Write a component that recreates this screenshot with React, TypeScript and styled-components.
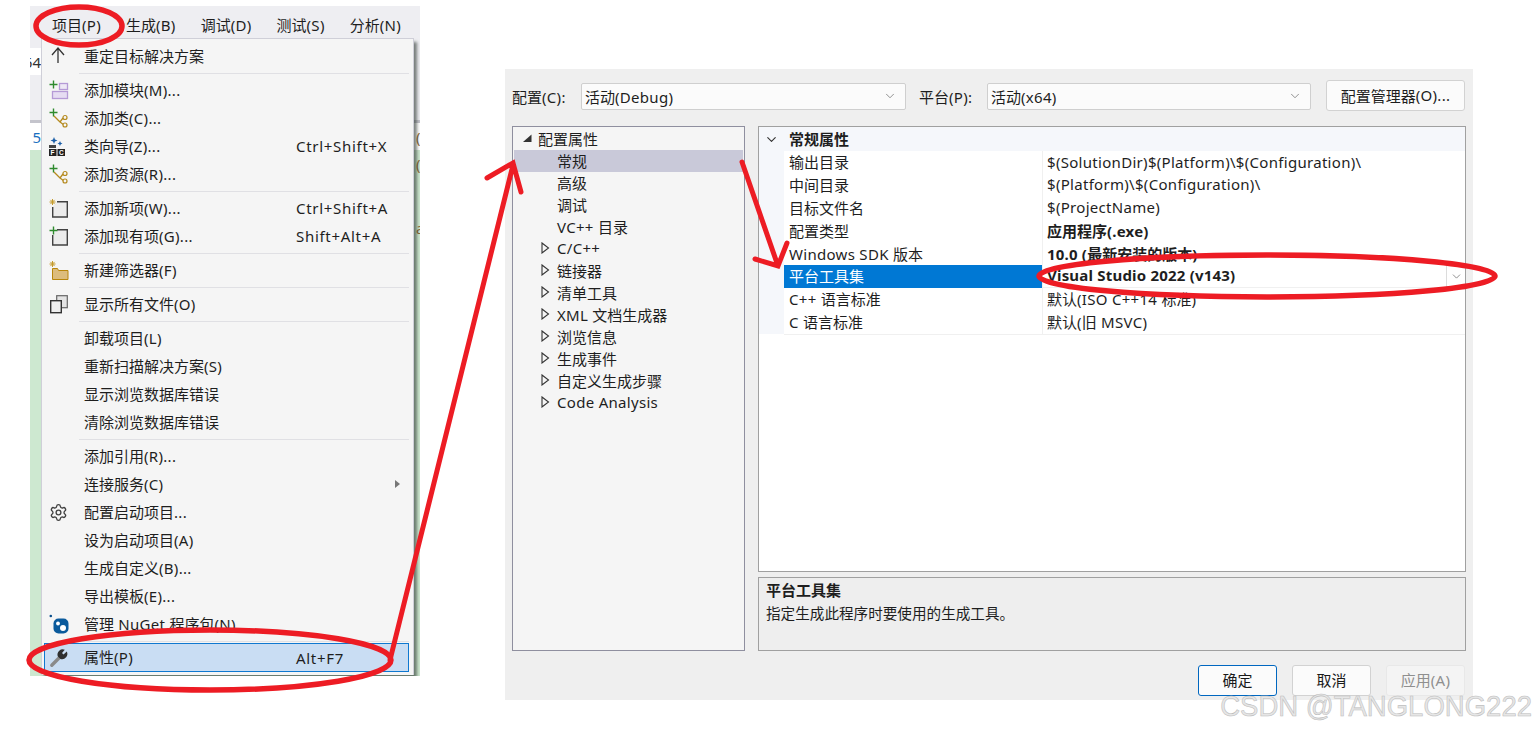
import React from 'react';
import styled, { createGlobalStyle } from 'styled-components';
import { ChevronDown, Settings } from 'lucide-react';

const GlobalStyle = createGlobalStyle`
  html, body { margin: 0; padding: 0; background: #fff; }
  body { font-family: "Noto Sans", "Noto Sans CJK SC", sans-serif; font-size: 15px; color: #1e1e1e; }
  * { box-sizing: border-box; }
`;

// Latin runs are a little wider in the reference's UI font than in Noto Sans
const Latin = styled.span`
  letter-spacing: 0.3px;
`;

const T = ({ s }: { s: string }) => (
  <>{s.split(/([\x20-\x7e]+)/).map((part, i) => (i % 2 ? <Latin key={i}>{part}</Latin> : part))}</>
);

// --- PAGE ---
const Page = styled.div`
  position: relative;
  display: flex;
  align-items: flex-start;
  width: 1536px;
  height: 732px;
  overflow: hidden;
  background: #fff;
`;

// --- IDE BEHIND THE MENU ---
const Ide = styled.div`
  position: relative;
  flex: none;
  width: 390px;
  height: 670px;
  margin: 6px 0 0 30px;
  display: flex;
  flex-direction: column;
  overflow: hidden;
`;

const MenuBar = styled.div`
  display: flex;
  align-items: center;
  gap: 25px;
  height: 32px;
  flex: none;
  padding: 4px 0 0 22px;
  background: #eeeef2;
`;

const Strip = styled.div<{ $h: number; $bg: string }>`
  display: flex;
  justify-content: space-between;
  align-items: center;
  height: ${p => p.$h}px;
  flex: none;
  background: ${p => p.$bg};
`;

const Canvas = styled.div`
  flex: 1;
  display: flex;
  flex-direction: column;
  align-items: flex-end;
  padding-top: 4px;
  gap: 44px;
  background: #cde8d0;
`;

const Edge = styled.span<{ $color?: string }>`
  width: 11px;
  height: 100%;
  display: flex;
  align-items: center;
  justify-content: flex-end;
  overflow: hidden;
  white-space: nowrap;
  color: ${p => p.$color ?? '#333'};
  background: #fff;
`;

const RightEdge = styled.span`
  width: 4px;
  overflow: hidden;
  white-space: nowrap;
  color: #8a6a3a;
`;

// --- DROPDOWN MENU ---
const Menu = styled.div`
  position: absolute;
  left: 11px;
  top: 32px;
  width: 373px;
  padding: 3px 4px 3px 2px;
  background: #f5f5f5;
  border: 1px solid #cfcfd8;
  border-bottom: none;
  box-shadow: 3px 4px 3px rgba(40, 50, 45, 0.6);
`;

const MenuRow = styled.div<{ $selected?: boolean }>`
  display: grid;
  grid-template-columns: 40px 212px 1fr;
  align-items: center;
  height: ${p => (p.$selected ? 29 : 28)}px;
  margin-top: ${p => (p.$selected ? -1 : 0)}px;
  background: ${p => (p.$selected ? '#c9ddf3' : 'transparent')};
  box-shadow: ${p => (p.$selected ? 'inset 0 0 0 1px #0f78d0' : 'none')};
  white-space: nowrap;
`;

const MenuIcon = styled.span`
  display: flex;
  align-items: center;
  justify-content: flex-start;
  padding-left: 5px;
  height: 20px;
`;

const MenuLabel = styled.span`
  padding-bottom: 2px;
`;

const MenuShortcut = styled.span`
  letter-spacing: 0.7px;
`;

const MenuSep = styled.div`
  height: 1px;
  margin: 3px 0 2px 35px;
  background: #e0e0e4;
`;

const Caret = styled.span`
  position: absolute;
  right: 13px;
  width: 0;
  height: 0;
  border-left: 5px solid #777;
  border-top: 4px solid transparent;
  border-bottom: 4px solid transparent;
`;

// --- DIALOG ---
const Dialog = styled.div`
  flex: none;
  width: 968px;
  height: 631px;
  margin: 69px 0 0 85px;
  padding: 11px 7px 0;
  background: #efefef;
  display: flex;
  flex-direction: column;
`;

const TopBar = styled.div`
  display: flex;
  align-items: center;
  height: 31px;
  flex: none;
`;

const FieldLabel = styled.span<{ $w: number; $ml?: number }>`
  width: ${p => p.$w}px;
  margin-left: ${p => p.$ml ?? 0}px;
  padding-top: 1px;
  white-space: nowrap;
`;

const Select = styled.div<{ $w: number }>`
  display: flex;
  align-items: center;
  justify-content: space-between;
  width: ${p => p.$w}px;
  height: 27px;
  padding: 0 8px 0 3px;
  margin-top: 1px;
  background: #fbfbfb;
  border: 1px solid #cfcfcf;
  border-radius: 2px;
`;

const ManagerButton = styled.div`
  display: flex;
  align-items: center;
  justify-content: center;
  width: 139px;
  height: 31px;
  margin: 0 1px 0 auto;
  padding-bottom: 1px;
  background: #fbfbfb;
  border: 1px solid #d2d2d2;
  border-radius: 3px;
`;

const Panes = styled.div`
  display: flex;
  gap: 13px;
  height: 525px;
  margin-top: 15px;
  flex: none;
`;

const Tree = styled.div`
  width: 233px;
  flex: none;
  padding: 1px 1px 0;
  background: #f5f5f5;
  border: 1px solid #8f8f9f;
`;

const TreeRow = styled.div<{ $level: number; $selected?: boolean }>`
  display: flex;
  align-items: center;
  height: 22px;
  padding: 0 0 2px ${p => (p.$level === 0 ? 7 : 26)}px;
  background: ${p => (p.$selected ? '#c9c9d9' : 'transparent')};
  white-space: nowrap;
`;

const Toggle = styled.span`
  display: flex;
  align-items: center;
  width: 17px;
  padding-left: 1px;
  flex: none;
`;

const RightPane = styled.div`
  flex: 1;
  display: flex;
  flex-direction: column;
  gap: 5px;
`;

const PropGrid = styled.div`
  height: 446px;
  flex: none;
  background: #fff;
  border: 1px solid #a0a0a0;
`;

const PropHeader = styled.div`
  display: grid;
  grid-template-columns: 25px 1fr;
  align-items: center;
  height: 24px;
  background: #f5f7fb;
  font-weight: 700;
`;

const HeaderChevron = styled.span`
  display: flex;
  justify-content: center;
  color: #333;
`;

const HeaderTitle = styled.span`
  padding: 0 0 2px 5px;
`;

const PropRow = styled.div`
  position: relative;
  display: grid;
  grid-template-columns: 25px 258px 1fr;
  height: 22.875px;
  background: #f5f7fb;
`;

const NameCell = styled.div<{ $selected?: boolean }>`
  display: flex;
  align-items: center;
  padding: 0 0 2px 5px;
  white-space: nowrap;
  color: ${p => (p.$selected ? '#fff' : '#1e1e1e')};
  background: ${p => (p.$selected ? '#0078d4' : '#fff')};
  border-bottom: ${p => (p.$selected ? 'none' : '1px solid #f0f0f0')};
`;

const ValueCell = styled.div<{ $bold?: boolean }>`
  display: flex;
  align-items: center;
  padding: 0 0 2px 4px;
  white-space: pre;
  font-weight: ${p => (p.$bold ? 700 : 400)};
  background: #fff;
  border-left: 1px solid #f0f0f0;
  border-bottom: 1px solid #f0f0f0;

  ${Latin} {
    letter-spacing: ${p => (p.$bold ? 0.2 : 0.3)}px;
  }
`;

const CellDrop = styled.span`
  position: absolute;
  right: 0;
  top: 0;
  bottom: 0;
  width: 19px;
  display: flex;
  align-items: center;
  justify-content: center;
  background: #fff;
  border-left: 1px solid #dcdcdc;
  color: #555;
`;

const DescBox = styled.div`
  flex: 1;
  padding: 2px 7px;
  background: #eeeeee;
  border: 1px solid #a0a0a0;
`;

const DescTitle = styled.div`
  font-weight: 700;
  line-height: 20px;
`;

const DescText = styled.div`
  font-size: 14.6px;
  line-height: 20px;
  margin-top: 3px;
`;

const Footer = styled.div`
  display: flex;
  justify-content: flex-end;
  gap: 15px;
  margin-top: 14px;
  padding-right: 1px;
`;

const ActionButton = styled.div<{ $primary?: boolean; $disabled?: boolean }>`
  display: flex;
  align-items: center;
  justify-content: center;
  width: 79px;
  height: 31px;
  padding-bottom: 3px;
  border-radius: 3px;
  color: ${p => (p.$disabled ? '#8f8f8f' : '#1a1a1a')};
  background: ${p => (p.$disabled ? '#f4f4f4' : '#fbfbfb')};
  border: 1px solid ${p => (p.$primary ? '#0067c0' : p.$disabled ? '#e8e8e8' : '#d2d2d2')};
`;

// --- ANNOTATIONS ---
const Marks = styled.svg`
  position: absolute;
  left: 0;
  top: 0;
  pointer-events: none;
`;

const Watermark = styled.div`
  position: absolute;
  right: 4px;
  top: 686px;
  font-family: "Liberation Sans", sans-serif;
  font-size: 30px;
  line-height: 40px;
  white-space: nowrap;
  color: #e6e6e6;
  -webkit-text-stroke: 0.6px #bdbdbd;
  transform: scaleX(0.917);
  transform-origin: right center;
`;

// --- ICONS ---
const Svg = ({ children }: { children: React.ReactNode }) => (
  <svg width="20" height="20" viewBox="0 0 20 20" fill="none">{children}</svg>
);

const GreenPlus = () => <path d="M4.5 0.5v8M0.5 4.5h8" stroke="#2e8b2e" strokeWidth="1.4" />;
const Spark = () => (
  <path d="M3.5 1v6M0.5 4h6M1.4 1.9l4.2 4.2M5.6 1.9l-4.2 4.2" stroke="#c49a2a" strokeWidth="1" />
);

const icons: Record<string, React.ReactNode> = {
  up: (
    <Svg>
      <path d="M9 2v15M3 9l6-7 6 7" stroke="#333" strokeWidth="1.3" />
    </Svg>
  ),
  module: (
    <Svg>
      <GreenPlus />
      <rect x="10.5" y="3.5" width="8" height="6" fill="#eee8f5" stroke="#b59ad6" strokeWidth="1.3" />
      <rect x="3.5" y="11.5" width="15" height="7" fill="#e6dcf2" stroke="#b59ad6" strokeWidth="1.3" />
    </Svg>
  ),
  cls: (
    <Svg>
      <GreenPlus />
      <path d="M5 8l6 6 3-4M11 14l4 3" stroke="#b58a1e" strokeWidth="1.3" />
      <circle cx="16" cy="9.5" r="2" fill="#f5f5f5" stroke="#b58a1e" strokeWidth="1.2" />
      <circle cx="16" cy="17" r="2" fill="#f5f5f5" stroke="#b58a1e" strokeWidth="1.2" />
    </Svg>
  ),
  wizard: (
    <Svg>
      <path d="M5 1l1 2.5 2.5 1-2.5 1-1 2.5-1-2.5-2.5-1 2.5-1z" fill="#1c5fa8" />
      <path d="M11 5l.8 1.7 1.7.8-1.7.8-.8 1.7-.8-1.7-1.7-.8 1.7-.8z" fill="#1c5fa8" />
      <rect x="0" y="9" width="7" height="3" fill="#444" />
      <rect x="0" y="13" width="7.5" height="7" fill="#222" />
      <rect x="8.5" y="13" width="7.5" height="7" fill="#222" />
      <text x="1.6" y="19" fontSize="6.5" fontWeight="700" fontFamily="Liberation Sans" fill="#fff">F</text>
      <text x="10" y="19" fontSize="6.5" fontWeight="700" fontFamily="Liberation Sans" fill="#fff">C</text>
    </Svg>
  ),
  newItem: (
    <Svg>
      <path d="M3.7 9v10h14.6V3.7H8z" fill="#ececec" />
      <path d="M8 3.7h10.3v15.3H3.7V9" stroke="#424242" strokeWidth="1.4" />
      <Spark />
    </Svg>
  ),
  existing: (
    <Svg>
      <path d="M3.7 9v10h14.6V3.7H8z" fill="#ececec" />
      <path d="M8 3.7h10.3v15.3H3.7V9" stroke="#424242" strokeWidth="1.4" />
      <GreenPlus />
    </Svg>
  ),
  folder: (
    <Svg>
      <path d="M3.5 19.5V8.5h5l1 2h9.5v9z" fill="#dcbc7c" stroke="#b8860b" strokeWidth="1" />
      <Spark />
    </Svg>
  ),
  files: (
    <Svg>
      <rect x="7.7" y="1.7" width="10.6" height="12" fill="#e4e4e4" stroke="#666" strokeWidth="1.2" />
      <rect x="1.7" y="6.7" width="10.6" height="12" fill="#efefef" stroke="#333" strokeWidth="1.4" />
    </Svg>
  ),
  gear: <Settings size={19} color="#424242" strokeWidth={1.7} />,
  nuget: (
    <Svg>
      <circle cx="1.8" cy="2" r="1.3" fill="#0a4f8c" />
      <rect x="4.5" y="4.5" width="15" height="15" rx="5" fill="#0a5a9c" />
      <circle cx="9" cy="9.5" r="1.9" fill="#fff" />
      <circle cx="14" cy="14" r="3" fill="#fff" />
    </Svg>
  ),
  wrench: (
    <Svg>
      <path d="M2.8 17.2L10.5 9.5" stroke="#8a8a8a" strokeWidth="3.4" strokeLinecap="round" />
      <path d="M17.8 3.6L14.5 6.5L13 5L15.8 1.8A5.3 5.3 0 0 0 8.7 8.2L11.5 11A5.3 5.3 0 0 0 17.8 3.6Z" fill="#2f2f2f" />
    </Svg>
  ),
};

// --- DATA ---
type MenuEntry = { label: string; icon?: string; shortcut?: string; submenu?: boolean; selected?: boolean } | 'sep';

const menuItems: MenuEntry[] = [
  { label: '重定目标解决方案', icon: 'up' },
  'sep',
  { label: '添加模块(M)...', icon: 'module' },
  { label: '添加类(C)...', icon: 'cls' },
  { label: '类向导(Z)...', icon: 'wizard', shortcut: 'Ctrl+Shift+X' },
  { label: '添加资源(R)...', icon: 'cls' },
  'sep',
  { label: '添加新项(W)...', icon: 'newItem', shortcut: 'Ctrl+Shift+A' },
  { label: '添加现有项(G)...', icon: 'existing', shortcut: 'Shift+Alt+A' },
  'sep',
  { label: '新建筛选器(F)', icon: 'folder' },
  'sep',
  { label: '显示所有文件(O)', icon: 'files' },
  'sep',
  { label: '卸载项目(L)' },
  { label: '重新扫描解决方案(S)' },
  { label: '显示浏览数据库错误' },
  { label: '清除浏览数据库错误' },
  'sep',
  { label: '添加引用(R)...' },
  { label: '连接服务(C)', submenu: true },
  { label: '配置启动项目...', icon: 'gear' },
  { label: '设为启动项目(A)' },
  { label: '生成自定义(B)...' },
  { label: '导出模板(E)...' },
  { label: '管理 NuGet 程序包(N)...', icon: 'nuget' },
  'sep',
  { label: '属性(P)', icon: 'wrench', shortcut: 'Alt+F7', selected: true },
];

const treeItems = [
  { label: '配置属性', level: 0, toggle: 'open' },
  { label: '常规', level: 1, selected: true },
  { label: '高级', level: 1 },
  { label: '调试', level: 1 },
  { label: 'VC++ 目录', level: 1 },
  { label: 'C/C++', level: 1, toggle: 'closed' },
  { label: '链接器', level: 1, toggle: 'closed' },
  { label: '清单工具', level: 1, toggle: 'closed' },
  { label: 'XML 文档生成器', level: 1, toggle: 'closed' },
  { label: '浏览信息', level: 1, toggle: 'closed' },
  { label: '生成事件', level: 1, toggle: 'closed' },
  { label: '自定义生成步骤', level: 1, toggle: 'closed' },
  { label: 'Code Analysis', level: 1, toggle: 'closed' },
];

const props = [
  { name: '输出目录', value: '$(SolutionDir)$(Platform)\\$(Configuration)\\' },
  { name: '中间目录', value: '$(Platform)\\$(Configuration)\\' },
  { name: '目标文件名', value: '$(ProjectName)' },
  { name: '配置类型', value: '应用程序(.exe)', bold: true },
  { name: 'Windows SDK 版本', value: '10.0 (最新安装的版本)', bold: true },
  { name: '平台工具集', value: 'Visual Studio 2022 (v143)', bold: true, selected: true },
  { name: 'C++ 语言标准', value: '默认(ISO C++14 标准)' },
  { name: 'C 语言标准', value: '默认(旧 MSVC)' },
];

const TreeToggle = ({ kind }: { kind?: string }) => (
  <Toggle>
    {kind === 'open' && (
      <svg width="10" height="10" viewBox="0 0 10 10"><path d="M9.5 1.5v7.5H1z" fill="#333" /></svg>
    )}
    {kind === 'closed' && (
      <svg width="9" height="12" viewBox="0 0 9 12" fill="none"><path d="M1 1l6.5 5L1 11z" stroke="#333" strokeWidth="1.1" /></svg>
    )}
  </Toggle>
);

export default function App() {
  return (
    <Page>
      <GlobalStyle />

      <Ide>
        <MenuBar>
          {['项目(P)', '生成(B)', '调试(D)', '测试(S)', '分析(N)'].map(m => (
            <span key={m}><T s={m} /></span>
          ))}
        </MenuBar>
        <Strip $h={10} $bg="#eeeef2" />
        <Strip $h={27} $bg="#eeeef2"><Edge>64</Edge></Strip>
        <Strip $h={45} $bg="#eeeef2" />
        <Strip $h={3} $bg="#c4c4cc" />
        <Strip $h={27} $bg="#fff">
          <Edge $color="#1a6fc0">5</Edge>
          <RightEdge>(:</RightEdge>
        </Strip>
        <Canvas>
          <RightEdge>(</RightEdge>
          <RightEdge>a</RightEdge>
        </Canvas>

        <Menu>
          {menuItems.map((item, i) =>
            item === 'sep' ? (
              <MenuSep key={i} />
            ) : (
              <MenuRow key={i} $selected={item.selected}>
                <MenuIcon>{item.icon ? icons[item.icon] : null}</MenuIcon>
                <MenuLabel><T s={item.label} /></MenuLabel>
                <MenuShortcut>{item.shortcut}</MenuShortcut>
                {item.submenu && <Caret />}
              </MenuRow>
            )
          )}
        </Menu>
      </Ide>

      <Dialog>
        <TopBar>
          <FieldLabel $w={69}><T s="配置(C):" /></FieldLabel>
          <Select $w={325}><span><T s="活动(Debug)" /></span><ChevronDown size={14} color="#666" strokeWidth={1.2} /></Select>
          <FieldLabel $w={68} $ml={13}><T s="平台(P):" /></FieldLabel>
          <Select $w={324}><span><T s="活动(x64)" /></span><ChevronDown size={14} color="#666" strokeWidth={1.2} /></Select>
          <ManagerButton><T s="配置管理器(O)..." /></ManagerButton>
        </TopBar>

        <Panes>
          <Tree>
            {treeItems.map(item => (
              <TreeRow key={item.label} $level={item.level} $selected={item.selected}>
                <TreeToggle kind={item.toggle} />
                <span><T s={item.label} /></span>
              </TreeRow>
            ))}
          </Tree>

          <RightPane>
            <PropGrid>
              <PropHeader>
                <HeaderChevron><ChevronDown size={15} strokeWidth={1.8} /></HeaderChevron>
                <HeaderTitle>常规属性</HeaderTitle>
              </PropHeader>
              {props.map(row => (
                <PropRow key={row.name}>
                  <span />
                  <NameCell $selected={row.selected}><span><T s={row.name} /></span></NameCell>
                  <ValueCell $bold={row.bold}><span><T s={row.value} /></span></ValueCell>
                  {row.selected && <CellDrop><ChevronDown size={13} strokeWidth={1.2} /></CellDrop>}
                </PropRow>
              ))}
            </PropGrid>
            <DescBox>
              <DescTitle>平台工具集</DescTitle>
              <DescText>指定生成此程序时要使用的生成工具。</DescText>
            </DescBox>
          </RightPane>
        </Panes>

        <Footer>
          <ActionButton $primary>确定</ActionButton>
          <ActionButton>取消</ActionButton>
          <ActionButton $disabled><span><T s="应用(A)" /></span></ActionButton>
        </Footer>
      </Dialog>

      <Marks width="1536" height="732" viewBox="0 0 1536 732" fill="none" stroke="#ed1c24" strokeWidth="5" strokeLinecap="round">
        <ellipse cx="79" cy="26" rx="43" ry="19" strokeWidth="5.5" />
        <ellipse cx="210" cy="660" rx="181" ry="30" strokeWidth="5.5" />
        <ellipse cx="1267" cy="276" rx="228" ry="21" strokeWidth="5.5" />
        <path d="M390 660L513 165M487 178L513 163L521 192" />
        <path d="M742 162L778 266M755 259L778 266L787 243" />
      </Marks>
      <Watermark>CSDN @TANGLONG222</Watermark>
    </Page>
  );
}
